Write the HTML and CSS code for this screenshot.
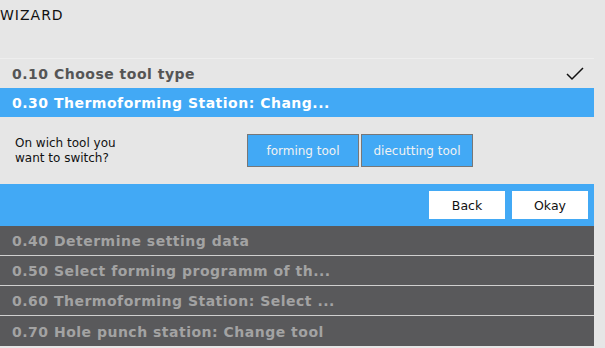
FILE: index.html
```html
<!DOCTYPE html>
<html lang="en">
<head>
  <meta charset="UTF-8" />
  <title>Wizard</title>
  <link rel="stylesheet" href="styles.css">
</head>
<body>

<div class="wizard">
  <header class="wizard-title">WIZARD</header>

  <div class="steps">
    <div class="step done">
      <span>0.10 Choose tool type</span>
      <svg class="check" width="20" height="16" viewBox="0 0 20 16">
        <path d="M2 8 L7 13 L18 2" fill="none" stroke="#111" stroke-width="1.5"/>
      </svg>
    </div>

    <div class="step active">0.30 Thermoforming Station: Chang...</div>

    <div class="step-body">
      <p class="question">On wich tool you<br>want to switch?</p>
      <div class="choices">
        <button class="choice">forming tool</button>
        <button class="choice">diecutting tool</button>
      </div>
    </div>

    <div class="step-actions">
      <button class="action">Back</button>
      <button class="action">Okay</button>
    </div>

    <div class="step todo">0.40 Determine setting data</div>
    <div class="step todo">0.50 Select forming programm of th...</div>
    <div class="step todo">0.60 Thermoforming Station: Select ...</div>
    <div class="step todo">0.70 Hole punch station: Change tool</div>
  </div>
</div>

</body>
</html>
```

FILE: styles.css
```css
* {
  margin: 0;
  padding: 0;
  box-sizing: border-box;
  font-family: 'DejaVu Sans', Verdana, sans-serif;
}

body {
  background: #e6e6e6;
  color: #111;
}

.wizard {
  width: 594px;
}

.wizard-title {
  font-size: 14px;
  letter-spacing: 1px;
  height: 58px;
  padding-top: 7px;
}

.steps {
  border-top: 1px solid #eeeeee;
}

.step {
  height: 30px;
  display: flex;
  align-items: center;
  justify-content: space-between;
  padding: 0 12px;
  font-size: 14px;
  letter-spacing: 0.5px;
  font-weight: bold;
}

.step.done {
  color: #555;
  height: 29px;
  padding-top: 1px;
  padding-right: 9px;
}

.step.active {
  background: #42a9f5;
  color: white;
  height: 29px;
}

.step.todo {
  background: #59595b;
  color: #a3a3a3;
  border-bottom: 1px solid #d0d0d0;
  padding-top: 1px;
}

.step.todo:last-child {
  border-bottom: none;
}

.step-body {
  height: 67px;
  display: flex;
  align-items: center;
  padding: 0 15px;
}

.question {
  font-size: 12px;
  line-height: 15px;
  width: 232px;
}

.choices {
  display: flex;
  gap: 2px;
}

.choice {
  background: #42a9f5;
  color: #f2f2f2;
  border: 1px solid #777;
  height: 33px;
  width: 112px;
  font-size: 12px;
}

.step-actions {
  background: #42a9f5;
  height: 42px;
  display: flex;
  justify-content: flex-end;
  align-items: center;
  gap: 7px;
  padding-right: 6px;
}

.action {
  background: white;
  border: none;
  width: 76px;
  height: 28px;
  font-size: 12.5px;
  color: #111;
}
```
